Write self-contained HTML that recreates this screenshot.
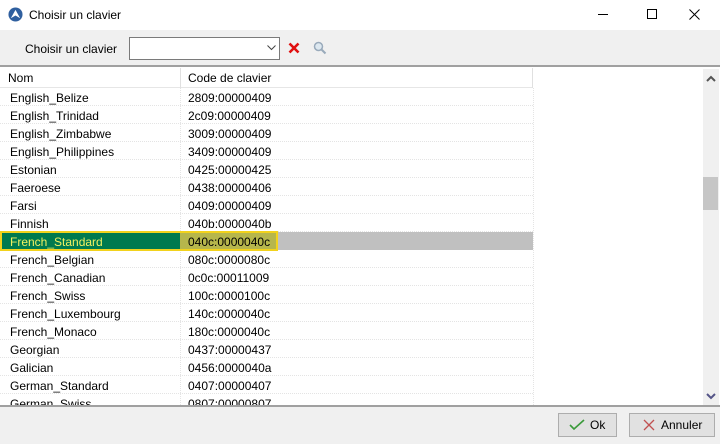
<!DOCTYPE html>
<html><head><style>
*{margin:0;padding:0;box-sizing:border-box}
body{width:720px;height:444px;overflow:hidden;background:#fff;font-family:"Liberation Sans",sans-serif;font-size:12px;color:#000;position:relative}
.abs{position:absolute}
.row{position:absolute;left:0;width:533px;height:18px;border-bottom:1px dotted #e4e4e4}
.row span{position:absolute;top:3px}
.row .a{left:10px}.row .b{left:188px}
</style></head><body>
<div class="abs" style="left:0;top:0;width:720px;height:30px;background:#fff">
 <svg class="abs" style="left:8px;top:7px" width="15" height="15" viewBox="0 0 16 16"><circle cx="8" cy="8" r="7.5" fill="#2f5f9f"/><path d="M3 12 L8 3 L13 12 L8 9Z" fill="#fff"/></svg>
 <div class="abs" style="left:29px;top:8px;font-size:12px">Choisir un clavier</div>
 <div class="abs" style="left:598px;top:14px;width:10px;height:1px;background:#000"></div>
 <div class="abs" style="left:647px;top:9px;width:10px;height:10px;border:1px solid #000"></div>
 <svg class="abs" style="left:689px;top:9px" width="11" height="11"><path d="M0.5 0.5 L10.5 10.5 M10.5 0.5 L0.5 10.5" stroke="#000" stroke-width="1"/></svg>
</div>
<div class="abs" style="left:0;top:30px;width:720px;height:37px;background:#f0f0f0;border-bottom:2px solid #a0a0a0"></div>
<div class="abs" style="left:25px;top:42px">Choisir un clavier</div>
<div class="abs" style="left:129px;top:37px;width:151px;height:23px;background:#fff;border:1px solid #7a7a7a"></div>
<svg class="abs" style="left:267px;top:45px" width="9" height="6"><path d="M0.5 0.5 L4.5 4.5 L8.5 0.5" stroke="#444" fill="none"/></svg>
<svg class="abs" style="left:288px;top:42px" width="12" height="12"><path d="M1.5 1.5 L10.5 10.5 M10.5 1.5 L1.5 10.5" stroke="#e01010" stroke-width="2.6"/></svg>
<svg class="abs" style="left:313px;top:41px" width="14" height="14"><circle cx="5.5" cy="5.5" r="4" stroke="#9ab" stroke-width="1.5" fill="#dde8f0"/><path d="M8.5 8.5 L12.5 12.5" stroke="#9ab" stroke-width="2"/></svg>
<div class="abs" style="left:0;top:68px;width:533px;height:20px;border-bottom:1px solid #e6e6e6">
 <span class="abs" style="left:8px;top:3px">Nom</span><span class="abs" style="left:188px;top:3px">Code de clavier</span>
 <div class="abs" style="left:180px;top:0;width:1px;height:20px;background:#e0e0e0"></div>
 <div class="abs" style="left:532px;top:0;width:1px;height:20px;background:#e0e0e0"></div>
</div>
<div class="abs" style="left:180px;top:88px;width:0;height:317px;border-left:1px dotted #e4e4e4"></div>
<div class="abs" style="left:533px;top:88px;width:0;height:317px;border-left:1px dotted #e4e4e4"></div>
<div class="abs" style="left:0;top:88px;width:533px;height:317px;overflow:hidden">
<div class="row" style="top:0"><span class="a">English_Belize</span><span class="b">2809:00000409</span></div>
<div class="row" style="top:18px"><span class="a">English_Trinidad</span><span class="b">2c09:00000409</span></div>
<div class="row" style="top:36px"><span class="a">English_Zimbabwe</span><span class="b">3009:00000409</span></div>
<div class="row" style="top:54px"><span class="a">English_Philippines</span><span class="b">3409:00000409</span></div>
<div class="row" style="top:72px"><span class="a">Estonian</span><span class="b">0425:00000425</span></div>
<div class="row" style="top:90px"><span class="a">Faeroese</span><span class="b">0438:00000406</span></div>
<div class="row" style="top:108px"><span class="a">Farsi</span><span class="b">0409:00000409</span></div>
<div class="row" style="top:126px"><span class="a">Finnish</span><span class="b">040b:0000040b</span></div>
<div class="row" style="top:144px;background:#c0c0c0;border:none">
 <div class="abs" style="left:0;top:-1px;width:278px;height:20px;border:2px solid #f2d21c;background:#b6b64c"></div>
 <div class="abs" style="left:2px;top:1px;width:178px;height:16px;background:#007a4f"></div>
 <span class="a" style="color:#f0f060">French_Standard</span><span class="b">040c:0000040c</span></div>
<div class="row" style="top:162px"><span class="a">French_Belgian</span><span class="b">080c:0000080c</span></div>
<div class="row" style="top:180px"><span class="a">French_Canadian</span><span class="b">0c0c:00011009</span></div>
<div class="row" style="top:198px"><span class="a">French_Swiss</span><span class="b">100c:0000100c</span></div>
<div class="row" style="top:216px"><span class="a">French_Luxembourg</span><span class="b">140c:0000040c</span></div>
<div class="row" style="top:234px"><span class="a">French_Monaco</span><span class="b">180c:0000040c</span></div>
<div class="row" style="top:252px"><span class="a">Georgian</span><span class="b">0437:00000437</span></div>
<div class="row" style="top:270px"><span class="a">Galician</span><span class="b">0456:0000040a</span></div>
<div class="row" style="top:288px"><span class="a">German_Standard</span><span class="b">0407:00000407</span></div>
<div class="row" style="top:306px"><span class="a">German_Swiss</span><span class="b">0807:00000807</span></div>
</div>
<div class="abs" style="left:703px;top:69px;width:16px;height:336px;background:#f0f0f0"></div>
<div class="abs" style="left:703px;top:177px;width:15px;height:33px;background:#c6c6c6"></div>
<svg class="abs" style="left:706px;top:75px" width="10" height="7"><path d="M1 6 L5 2 L9 6" stroke="#555" stroke-width="2" fill="none"/></svg>
<svg class="abs" style="left:706px;top:393px" width="10" height="7"><path d="M1 1 L5 5 L9 1" stroke="#558" stroke-width="2" fill="none"/></svg>
<div class="abs" style="left:0;top:405px;width:720px;height:39px;background:#f0f0f0;border-top:2px solid #a0a0a0"></div>
<div class="abs" style="left:558px;top:413px;width:59px;height:24px;background:#e1e1e1;border:1px solid #adadad">
 <svg class="abs" style="left:10px;top:5px" width="16" height="12"><path d="M1 6 L5 10 L15 1" stroke="#3a9a3a" stroke-width="1.6" fill="none"/></svg>
 <span class="abs" style="left:31px;top:4px">Ok</span></div>
<div class="abs" style="left:629px;top:413px;width:86px;height:24px;background:#e1e1e1;border:1px solid #adadad">
 <svg class="abs" style="left:13px;top:5px" width="12" height="12"><path d="M1 1 L11 11 M11 1 L1 11" stroke="#c05050" stroke-width="1.3"/></svg>
 <span class="abs" style="left:31px;top:4px">Annuler</span></div>
</body></html>
